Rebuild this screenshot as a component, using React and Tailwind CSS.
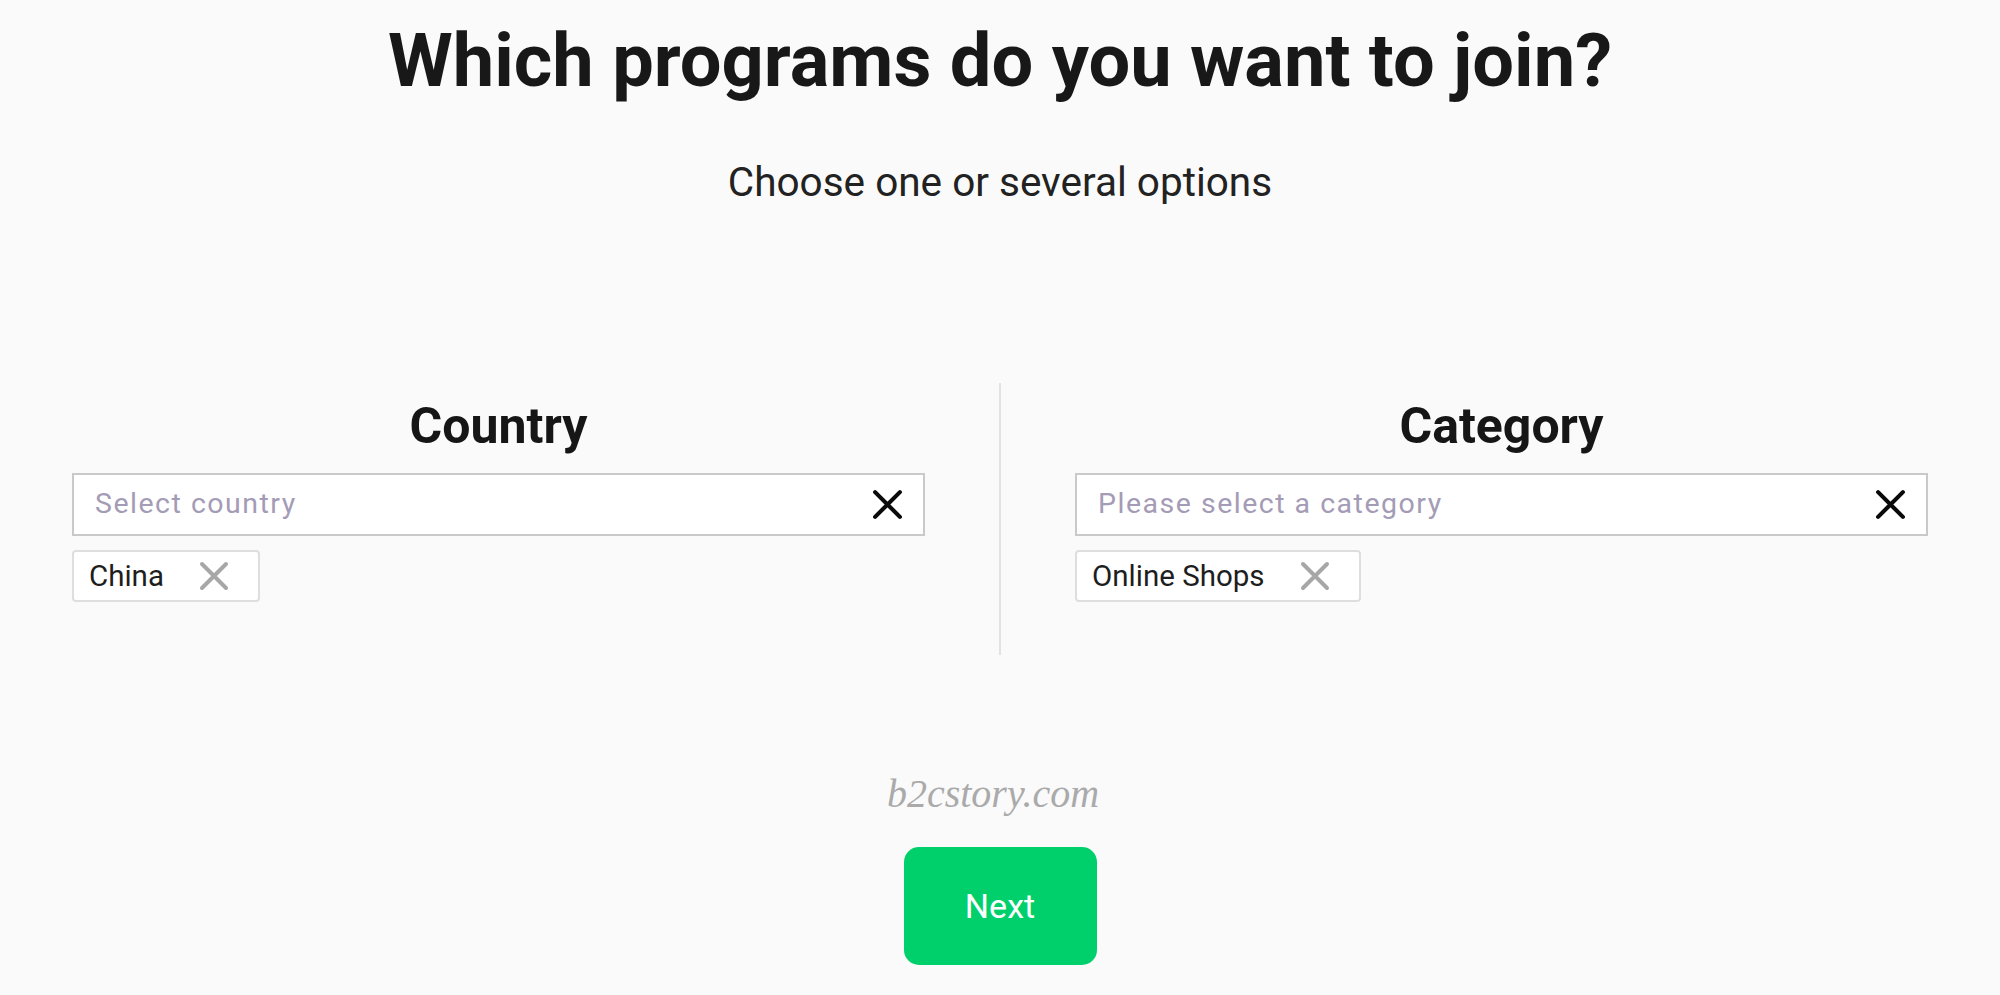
import React from "react";

const CloseIcon = ({ className = "", stroke = "#000", width = 4 }) => (
  <svg viewBox="0 0 30 30" className={className} fill="none">
    <path d="M3 3L27 27M27 3L3 27" stroke={stroke} strokeWidth={width} strokeLinecap="round" />
  </svg>
);

const Picker = ({ title, placeholder, chip }) => {
  return (
    <div className="flex flex-col pt-[15px] pb-[53px]">
      <h2 className="text-center text-[50px] leading-[57px] font-bold text-[#161616]">{title}</h2>

      {/* Search field */}
      <div className="mt-[18px] h-[63px] flex items-center bg-white border-2 border-[#c9c9c9] pl-[21px] pr-[20px]">
        <input
          type="text"
          placeholder={placeholder}
          className="flex-1 bg-transparent outline-none text-[28.5px] tracking-[1.5px] text-[#222] placeholder:text-[#a49bb6]"
        />
        <CloseIcon className="w-[31px] h-[31px]" stroke="#0a0a0a" width={4} />
      </div>

      {/* Selected chips */}
      <div className="mt-[14px] flex">
        <div className="h-[52px] flex items-center gap-[35px] bg-white border-2 border-[#dedede] rounded-[4px] pl-[15px] pr-[29px]">
          <span className="text-[29.5px] text-[#1e1e1e]">{chip}</span>
          <CloseIcon className="w-[30px] h-[30px]" stroke="#a7a7a7" width={4} />
        </div>
      </div>
    </div>
  );
};

const App = () => {
  return (
    <div className="w-full min-h-[995px] bg-[#fafafa] flex flex-col items-center font-['Roboto',sans-serif]">
      <h1 className="pt-[16px] text-[74px] leading-[90px] font-bold text-[#181818] text-center">
        Which programs do you want to join?
      </h1>
      <p className="mt-[52px] text-[40.5px] leading-[48px] text-[#222] text-center">
        Choose one or several options
      </p>

      <div className="mt-[177px] w-full px-[72px] grid grid-cols-[1fr_2px_1fr] gap-x-[74px]">
        <Picker title="Country" placeholder="Select country" chip="China" />
        <div className="bg-[#e2e2e2]" />
        <Picker title="Category" placeholder="Please select a category" chip="Online Shops" />
      </div>

      <div className="mt-[117px] mr-[14px] text-[40px] leading-[44px] italic text-[#aaaaaa] font-['Liberation_Serif',serif]">
        b2cstory.com
      </div>

      <button className="mt-[31px] w-[193px] h-[118px] rounded-[15px] bg-[#00d06b] text-white text-[34px]">
        Next
      </button>
    </div>
  );
};

export default App;
